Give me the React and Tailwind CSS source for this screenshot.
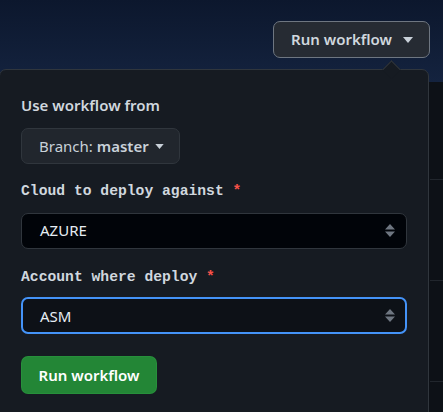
import React from 'react';

const SANS = { fontFamily: '"Noto Sans", "Open Sans", sans-serif' };
const MONO = { fontFamily: '"Liberation Mono", "DejaVu Sans Mono", monospace' };

function Caret({ className = '', w = 10, h = 6 }) {
  return (
    <svg width={w} height={h} viewBox="0 0 10 6" className={className}>
      <path d="M0 0h10L5 6z" fill="currentColor" />
    </svg>
  );
}

function UpDown() {
  return (
    <svg width="10" height="13" viewBox="0 0 10 13">
      <path d="M5 0l5 5.5H0z M5 13l5-5.5H0z" fill="#6e7681" />
    </svg>
  );
}

function SelectBox({ value, focused }) {
  return (
    <div
      className={
        'w-[386px] rounded-[7px] flex items-center justify-between ' +
        (focused
          ? 'h-[37px] border-2 border-[#4493f8] bg-[#0d1117] pl-[17px] pr-[10px]'
          : 'h-[36px] border border-[#30363d] bg-[#010409] pl-[18px] pr-[11px]')
      }
    >
      <span className="text-[15px] text-[#e6edf3]">{value}</span>
      <UpDown />
    </div>
  );
}

function FieldLabel({ children }) {
  return (
    <div className="text-[14.7px] font-bold text-[#d0d7de] leading-none" style={MONO}>
      {children} <span className="text-[#f85149]">*</span>
    </div>
  );
}

export default function App() {
  return (
    <div className="relative w-[443px] h-[412px] overflow-hidden bg-[#0d1117]" style={SANS}>
      <div className="h-[82px] bg-gradient-to-b from-[#0c172d] to-[#14233f] flex justify-end pt-[21px] pr-[13px]">
        <button className="h-[37px] w-[157px] rounded-[7px] border border-[#6e7681] bg-[#262b33] text-[#d0d7de] text-[15px] font-semibold flex items-center pl-[17px] gap-[11px]">
          Run workflow
          <Caret className="text-[#c9d1d9]" />
        </button>
      </div>
      <div className="ml-[430px]">
        <div className="h-[98px] border-b border-[#21262d]" />
        <div className="h-[101px] border-b border-[#21262d]" />
        <div className="h-[101px] border-b border-[#21262d]" />
      </div>

      <div className="absolute left-[-1px] top-[69px] w-[430px] h-[360px] rounded-[7px] border border-[#30363d] bg-[#161b22]">
        <div className="absolute right-[30px] top-[-7px] w-[13px] h-[13px] rotate-45 bg-[#161b22] border-l border-t border-[#30363d]" />
        <div className="pl-[21px] pt-[24px] flex flex-col">
          <div className="text-[15px] font-semibold text-[#d0d7de] leading-[22px]">Use workflow from</div>
          <button className="mt-[12px] h-[36px] w-[159px] rounded-[7px] border border-[#30363d] bg-[#21262d] flex items-center pl-[17px] gap-[6px] text-[15px] text-[#c9d1d9]">
            <span>
              Branch: <span className="font-semibold">master</span>
            </span>
            <Caret className="text-[#c9d1d9]" w={9} h={5} />
          </button>
          <div className="mt-[20px]">
            <FieldLabel>Cloud to deploy against</FieldLabel>
          </div>
          <div className="mt-[14px]">
            <SelectBox value="AZURE" />
          </div>
          <div className="mt-[21px]">
            <FieldLabel>Account where deploy</FieldLabel>
          </div>
          <div className="mt-[13px]">
            <SelectBox value="ASM" focused />
          </div>
          <button className="mt-[22px] h-[38px] w-[136px] rounded-[7px] border border-[#2ea043]/40 bg-[#238636] text-white text-[15px] font-semibold">
            Run workflow
          </button>
        </div>
      </div>
    </div>
  );
}
